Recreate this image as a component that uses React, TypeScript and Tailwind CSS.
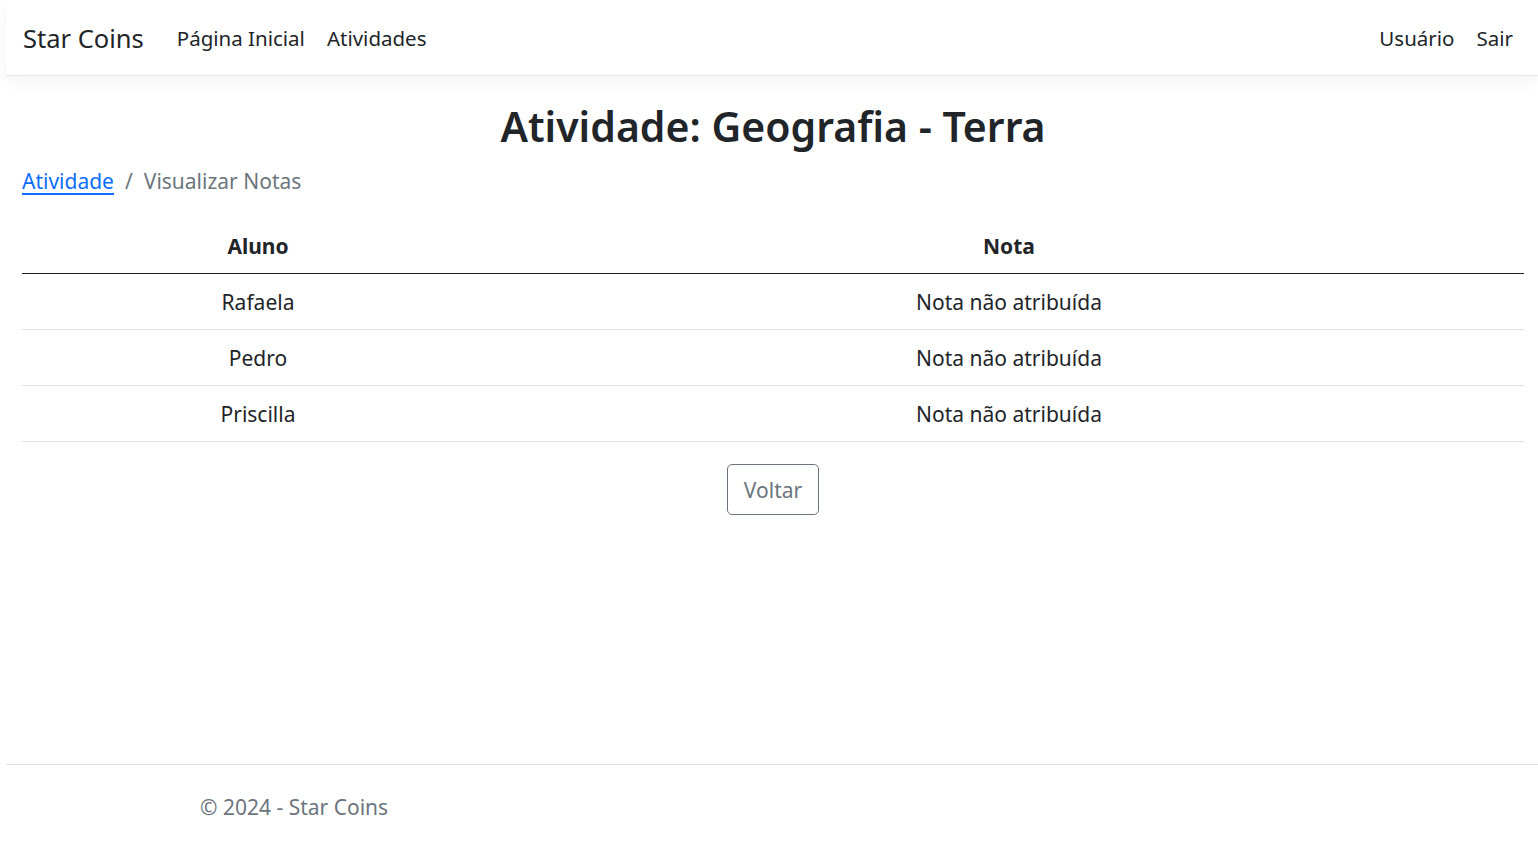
import React from "react";

const alunos = [
  { nome: "Rafaela", nota: null },
  { nome: "Pedro", nota: null },
  { nome: "Priscilla", nota: null },
];

const App = () => {
  return (
    <div
      className="min-h-[844px] bg-white pl-[6px] text-[#212529] flex flex-col"
      style={{ fontFamily: '"Noto Sans", "Open Sans", sans-serif' }}
    >
      {/* Navbar */}
      <nav className="h-[76px] flex items-center justify-between pl-[17px] pr-[25px] bg-white border-b border-[#e5e7eb] shadow-[0_6px_14px_rgba(0,0,0,0.05)]">
        <div className="flex items-center pt-[2px]">
          <a className="text-[25.5px] mr-[33px] text-[#212529]">Star Coins</a>
          <a className="text-[20.5px] mr-[22px] text-[#212529]">Página Inicial</a>
          <a className="text-[20.5px] text-[#212529]">Atividades</a>
        </div>
        <div className="flex items-center gap-[22px] pt-[2px]">
          <a className="text-[20.5px] text-[#212529]">Usuário</a>
          <a className="text-[20.5px] text-[#212529]">Sair</a>
        </div>
      </nav>

      {/* Main */}
      <main className="pl-4 pr-[14px] flex-1">
        <h1 className="text-center text-[41px] font-semibold leading-[52px] mt-[24px]">
          Atividade: Geografia - Terra
        </h1>
        <div className="flex items-center text-[21px] mt-[13px] leading-[32px]">
          <a className="text-[#0d6efd] underline underline-offset-4">Atividade</a>
          <span className="text-[#6c757d] px-[11px]">/</span>
          <span className="text-[#6c757d]">Visualizar Notas</span>
        </div>

        <table className="w-full mt-[22px] text-[21px] border-collapse">
          <thead>
            <tr className="border-b border-[#212529]">
              <th className="w-[472px] h-[54px] pt-[2px] text-center font-bold">Aluno</th>
              <th className="h-[54px] pt-[2px] text-center font-bold">Nota</th>
            </tr>
          </thead>
          <tbody>
            {alunos.map((a) => (
              <tr key={a.nome} className="border-b border-[#dee2e6]">
                <td className="h-[56px] pt-[3px] text-center">{a.nome}</td>
                <td className="h-[56px] pt-[3px] text-center">{a.nota ?? "Nota não atribuída"}</td>
              </tr>
            ))}
          </tbody>
        </table>

        <div className="flex justify-center mt-[22px]">
          <button className="w-[92px] h-[51px] pt-[3px] border border-[#6c757d] rounded-[5px] text-[21px] text-[#6c757d]">
            Voltar
          </button>
        </div>
      </main>

      {/* Footer */}
      <footer className="border-t border-[#dee2e6] h-[80px] flex items-center pl-[194px] pt-[6px] text-[21px] text-[#6c757d]">
        © 2024 - Star Coins
      </footer>
    </div>
  );
};

export default App;
